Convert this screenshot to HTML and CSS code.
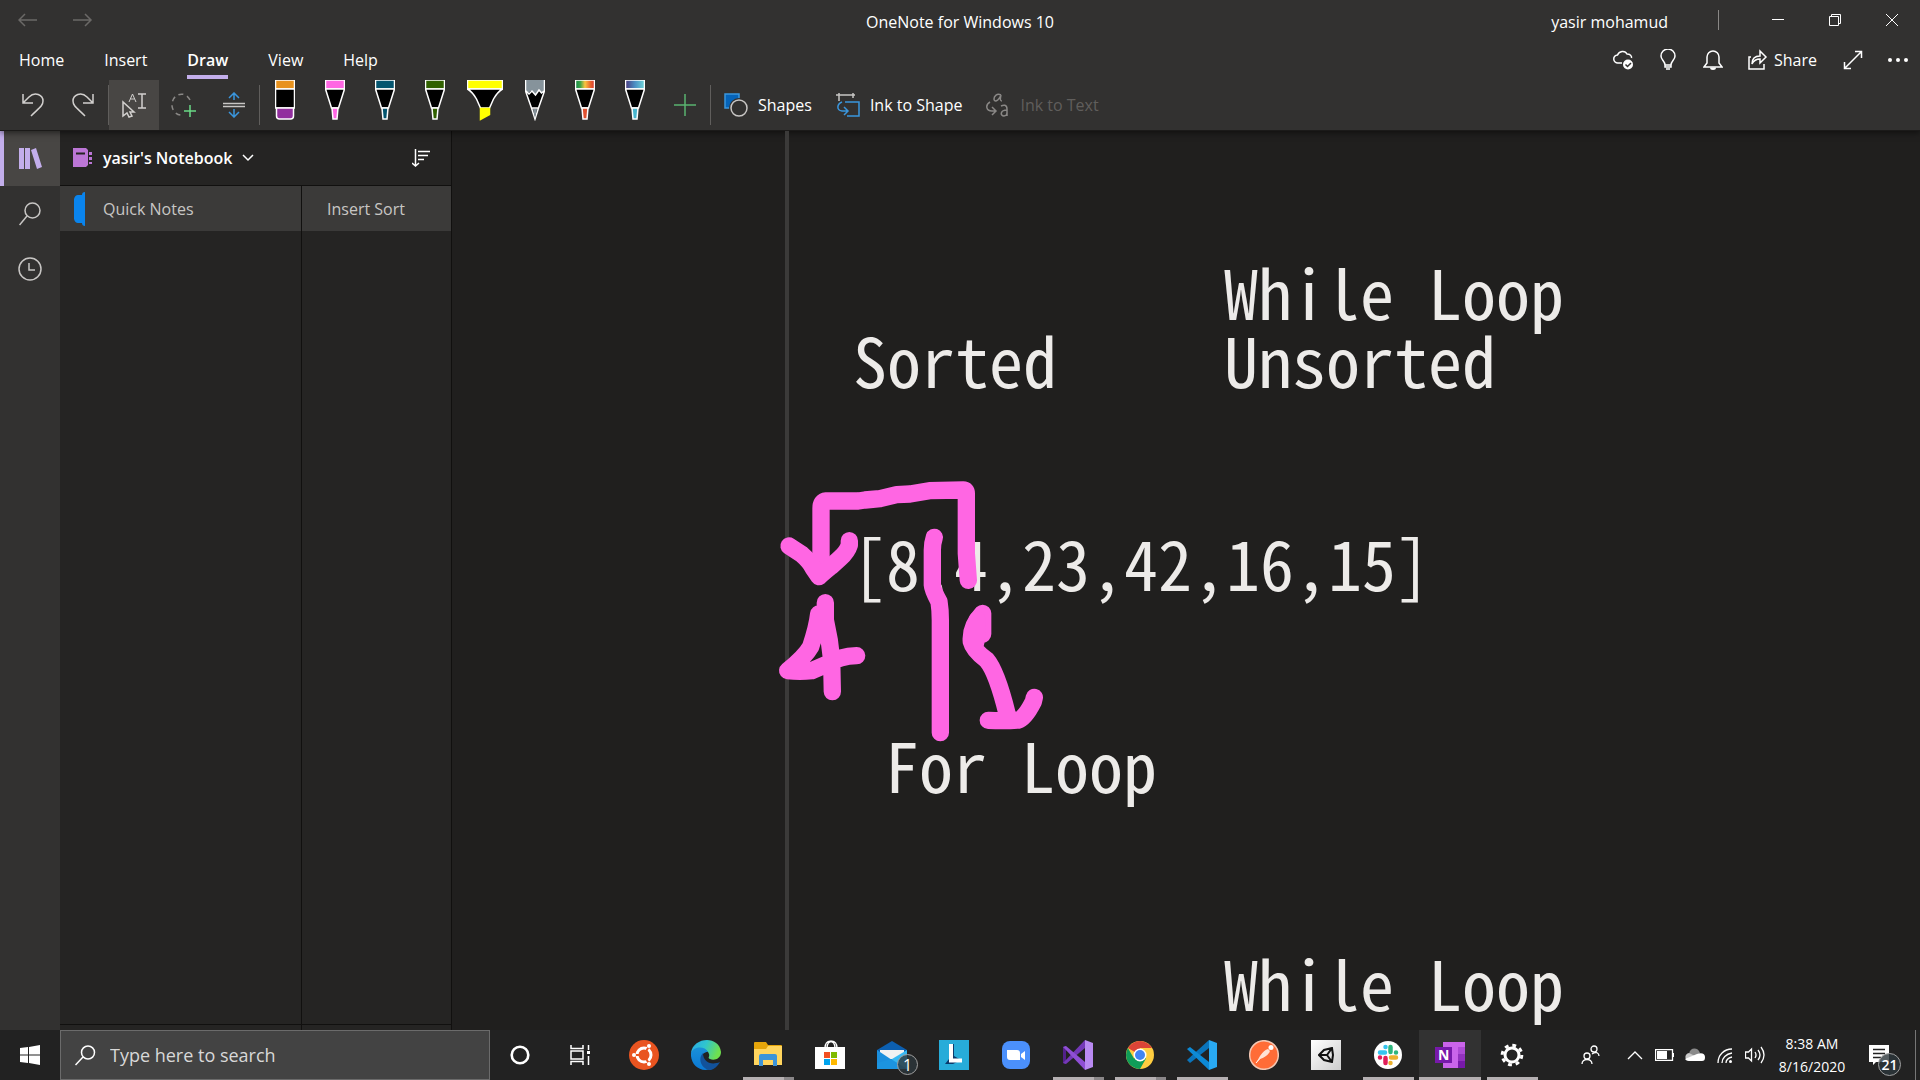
FILE: index.html
```html
<!DOCTYPE html>
<html lang="en">
<head>
<meta charset="utf-8">
<title>OneNote for Windows 10</title>
<link rel="stylesheet" href="styles.css">
</head>
<body>
<header class="chrome">
  <div class="titlebar">
    <div class="history">
      <button class="hist" aria-label="Back"><svg width="20" height="14" viewBox="0 0 20 14"><path d="M19 7H1M7 1L1 7l6 6"/></svg></button>
      <button class="hist" aria-label="Forward"><svg width="20" height="14" viewBox="0 0 20 14"><path d="M0 7h18M12 1l6 6-6 6"/></svg></button>
    </div>
    <h1 class="title">OneNote for Windows 10</h1>
    <div class="window">
      <span class="user">yasir mohamud</span>
      <span class="user-line"></span>
      <button class="win" aria-label="Minimize"><svg width="12" height="12" viewBox="0 0 12 12"><path d="M0 5.5h12"/></svg></button>
      <button class="win" aria-label="Restore"><svg width="12" height="12" viewBox="0 0 12 12"><path d="M.5 2.500h9v9h-9zM2.500 2.500v-2h9v9h-2"/></svg></button>
      <button class="win" aria-label="Close"><svg width="12" height="12" viewBox="0 0 12 12"><path d="M0 0l12 12M12 0L0 12"/></svg></button>
    </div>
  </div>
  <div class="tabrow">
    <nav class="tabs">
      <a class="tab" href="#home">Home</a>
      <a class="tab" href="#insert">Insert</a>
      <a class="tab tab-on" href="#draw">Draw</a>
      <a class="tab" href="#view">View</a>
      <a class="tab" href="#help">Help</a>
    </nav>
    <div class="actions">
      <button class="act" aria-label="Sync status"><svg width="22" height="22" viewBox="0 0 22 22"><path d="M10 14H6a4 4 0 0 1-.5-8C7 2 13 1 15 5c3 0 5 2 4.500 4"/><circle cx="16" cy="15.500" r="5" fill="#fff" stroke="none"/><path d="M13.500 15.500l2 2 3.500-3.500" stroke="#323130"/></svg></button>
      <button class="act" aria-label="Tell me"><svg width="16" height="22" viewBox="0 0 16 22"><path d="M5 16c0-4-4-5-4-9a7 7 0 0 1 14 0c0 4-4 5-4 9zM5 16v2h6v-2M6 20h4"/></svg></button>
      <button class="act" aria-label="Notifications"><svg width="20" height="22" viewBox="0 0 20 22"><path d="M1 18h18l-3-4V8a6 6 0 0 0-12 0v6z"/><path d="M7 18.500a3 2.500 0 0 0 6 0z" fill="#fff" stroke="none"/></svg></button>
      <button class="act share"><svg width="20" height="22" viewBox="0 0 20 22"><path d="M3 8H1v12h15v-5M4 15c0-5 3-8 8-8V2l6 6-6 6v-4c-4 0-6 1-8 5z"/></svg>Share</button>
      <button class="act" aria-label="Full screen"><svg width="20" height="20" viewBox="0 0 20 20"><path d="M1.500 18.500l17-17M12 1.500h6.500V8M1.500 12v6.500H8"/></svg></button>
      <button class="act" aria-label="More"><svg width="20" height="6" viewBox="0 0 20 6"><g fill="#fff" stroke="none"><circle cx="2" cy="3" r="2"/><circle cx="10" cy="3" r="2"/><circle cx="18" cy="3" r="2"/></g></svg></button>
    </div>
  </div>
  <div class="ribbon">
    <button class="tool" aria-label="Undo"><svg width="24" height="26" viewBox="0 0 24 26"><path d="M2 2v9h10M2 11L8 5c6-6 14-2 14 4 0 5-4 7-12 15"/></svg></button>
    <button class="tool" aria-label="Redo"><svg width="24" height="26" viewBox="0 0 24 26"><path d="M22 2v9H12M22 11l-6-6C10-1 2 3 2 9c0 5 4 7 12 15"/></svg></button>
    <span class="sep"></span>
    <button class="tool tool-on" aria-label="Select objects or type text"><svg width="26" height="26" viewBox="0 0 26 26"><path d="M2 10v14l4-3 2 4 3-1-2-4h4zM17 2h8M17 16h8M21 2v14"/><path d="M8 10l3.500-8L15 10M9.500 7h4" stroke-width="1"/></svg></button>
    <button class="tool" aria-label="Lasso select"><svg width="26" height="26" viewBox="0 0 26 26"><path d="M19 8A9.500 10.500 0 1 0 12 23" stroke="#8a8886" stroke-dasharray="5 4"/><path d="M19 13v12M13 19h12" stroke="#6ad985"/></svg></button>
    <button class="tool" aria-label="Insert space"><svg width="22" height="26" viewBox="0 0 22 26"><path d="M0 11.500h22M0 14.500h22" stroke="#c8c6c4"/><path d="M11 8V1M6 6l5-5 5 5M11 17v8M6 20l5 5 5-5" stroke="#3a96dd"/></svg></button>
    <span class="sep"></span>
    <button class="tool pen" aria-label="Eraser"><svg width="20" height="41" viewBox="0 0 20 41"><path d="M.5 0h19v9H.5z" fill="#e8921d"/><path d="M.5 9h19v19H.5z" fill="#000"/><path d="M1.500 28h17v8q0 3-3 3h-11q-3 0-3-3z" fill="#922f9e"/></svg></button>
    <button class="tool pen" aria-label="Pink pen"><svg width="20" height="41" viewBox="0 0 20 41"><path d="M.5 0h19v9H.5z" fill="#ff66e3"/><path d="M.5 9h19l-6 19h-7z" fill="#000"/><path d="M7 28h6l-1 11H8z" fill="#ff66e3"/></svg></button>
    <button class="tool pen" aria-label="Teal pen"><svg width="20" height="41" viewBox="0 0 20 41"><path d="M.5 0h19v9H.5z" fill="#04556f"/><path d="M.5 9h19l-6 19h-7z" fill="#000"/><path d="M7 28h6l-1 11H8z" fill="#04556f"/></svg></button>
    <button class="tool pen" aria-label="Green pen"><svg width="20" height="41" viewBox="0 0 20 41"><path d="M.5 0h19v9H.5z" fill="#316100"/><path d="M.5 9h19l-6 19h-7z" fill="#000"/><path d="M7 28h6l-1 11H8z" fill="#316100"/></svg></button>
    <button class="tool pen" aria-label="Yellow highlighter"><svg width="36" height="41" viewBox="0 0 36 41"><path d="M.5 0h35v9H.5z" fill="#ff0"/><path d="M.5 9h35q-5 3-9 10l-4 9h-9l-4-9q-4-7-9-10z" fill="#000"/><path d="M13.500 28.500h9v6l-9 5z" fill="#ff0" stroke="#ff0"/></svg></button>
    <button class="tool pen" aria-label="Pencil"><svg width="20" height="41" viewBox="0 0 20 41"><path d="M.5 0h19v11l-3 2-3-3-3 5-4-4-3 3-3-3z" fill="#86939b" stroke="none"/><path d="M1 12l2 1 3-2 4 4 4-5 3 3 2-1-6 16H7z" fill="#000" stroke="none"/><path d="M.5 0v11l6 17L10 39l3.500-11 6-17V0M1 11l3 3 3-3 3.500 4 3.500-5 2.500 3 2.500-2M6.500 28h7"/><path d="M8 29h4l-2 9z" fill="#86939b" stroke="none"/></svg></button>
    <button class="tool pen" aria-label="Rainbow pen"><svg width="20" height="41" viewBox="0 0 20 41"><defs><linearGradient id="rainbow"><stop offset="0" stop-color="#178a49"/><stop offset=".25" stop-color="#3da549"/><stop offset=".5" stop-color="#fbc43f"/><stop offset=".8" stop-color="#e8622e"/><stop offset="1" stop-color="#d93a35"/></linearGradient></defs><path d="M.5 0h19v9H.5z" fill="url(#rainbow)"/><path d="M.5 9h19l-6 19h-7z" fill="#000"/><path d="M7 28h6l-1 11H8z" fill="#e0512f"/></svg></button>
    <button class="tool pen" aria-label="Galaxy pen"><svg width="20" height="41" viewBox="0 0 20 41"><defs><linearGradient id="galaxy"><stop offset="0" stop-color="#4b3b80"/><stop offset=".5" stop-color="#4b8fc4"/><stop offset="1" stop-color="#6fd6d8"/></linearGradient></defs><path d="M.5 0h19v9H.5z" fill="url(#galaxy)"/><path d="M.5 9h19l-6 19h-7z" fill="#000"/><path d="M7 28h6l-1 11H8z" fill="#48b6cf"/></svg></button>
    <button class="tool" aria-label="Add pen"><svg width="22" height="22" viewBox="0 0 22 22"><path d="M11 0v22M0 11h22" stroke="#59b36f"/></svg></button>
    <span class="sep"></span>
    <button class="labeled"><svg width="24" height="24" viewBox="0 0 24 24"><path d="M1 1h14v14H1z" fill="#0563b8" stroke="#3a96dd"/><circle cx="15" cy="15" r="8" fill="#323130" stroke="#323130" stroke-width="4"/><circle cx="15" cy="15" r="8" stroke="#c8c6c4"/></svg>Shapes</button>
    <button class="labeled"><svg width="24" height="24" viewBox="0 0 24 24"><path d="M0 2h19M3 0v8M17 0v5" stroke="#c8c6c4"/><path d="M9 9h14v14H11M6 9c-5 2-6 8 0 9h6M8 14l4 4-4 4" stroke="#3a96dd"/></svg>Ink to Shape</button>
    <button class="labeled" disabled><svg class="ink-text" width="24" height="24" viewBox="0 0 24 24"><path d="M15 2c-4-2-7 1-7 4 0 3 4 3 7-4-1 4-1 6 1 6M15 13c2-1 6-2 6 3v7M21 17c-7 0-7 6-3 6 2 0 3-2 3-3M4 9c-5 3-4 9 2 9h4M6 14l4 4-4 4"/></svg>Ink to Text</button>
  </div>
</header>

<main class="workspace">
  <nav class="rail">
    <button class="rail-btn rail-on" aria-label="Notebooks"><svg width="24" height="22" viewBox="0 0 24 22"><path d="M0 0h5v21H0zM6 0h5v21H6zM12 2l5-2 6 19-5 2z" fill="#c3aeeb" stroke="none"/></svg></button>
    <button class="rail-btn" aria-label="Search"><svg width="22" height="24" viewBox="0 0 22 24"><circle cx="13.500" cy="8.500" r="7.500"/><path d="M8 14l-7.500 9"/></svg></button>
    <button class="rail-btn" aria-label="Recent notes"><svg width="24" height="24" viewBox="0 0 24 24"><circle cx="12" cy="12" r="11"/><path d="M11 6v7h6"/></svg></button>
  </nav>
  <aside class="panes">
    <div class="book">
      <button class="book-name"><svg class="book-icon" width="20" height="20" viewBox="0 0 20 20"><path d="M0 0h13l2 2v15l-2 2H0zM16 4h3v3h-3zM16 9h3v3h-3zM16 14h3v2h-3z" fill="#bc76d6" stroke="none"/><path d="M3 5.500h9" stroke="#252423" stroke-width="2"/></svg>yasir's Notebook<svg width="12" height="8" viewBox="0 0 12 8"><path d="M1 1l5 5 5-5"/></svg></button>
      <button class="sort" aria-label="Sort"><svg width="18" height="18" viewBox="0 0 18 18"><path d="M3.500 0v17M0 14l3.500 3L7 14M6 2.500h12M6 6.500h10M6 10.500h6"/></svg></button>
    </div>
    <div class="lists">
      <section class="sections">
        <a class="item" href="#quick"><svg width="12" height="34" viewBox="0 0 12 34"><path d="M11 0v34q-3 0-3-3H4q-3 0-4-4V7q1-4 4-4h4q0-3 3-3z" fill="#0a84ed" stroke="none"/></svg>Quick Notes</a>
        <div class="foot"></div>
      </section>
      <section class="pages">
        <a class="item item-page" href="#sort">Insert Sort</a>
        <div class="foot"></div>
      </section>
    </div>
  </aside>
  <article class="canvas">
    <p class="note note-while">While Loop</p>
    <p class="note note-sorted">Sorted</p>
    <p class="note note-unsorted">Unsorted</p>
    <p class="note note-array">[8,4,23,42,16,15]</p>
    <p class="note note-for">For Loop</p>
    <p class="note note-while2">While Loop</p>
    <svg class="ink" viewBox="0 0 1260 1080">
      <path d="M595 361L589 280V100Q589 90 580 90L478 92 420 102 380 104 330 116 285 120 265 123H168Q153 124 153 145V340"/>
      <path d="M57 258L95 283Q120 305 130 325L147 350Q160 338 182 320L210 295Q232 275 238 255V242"/>
      <path d="M166 428V480Q180 540 185 600L187 695M146 462Q142 500 122 560Q105 590 53 632Q90 636 125 632L170 613Q210 588 260 587"/>
      <path d="M493 232Q487 250 487 270V375Q488 390 507 425 511 450 511 480V818"/>
      <path d="M638 522V460Q600 500 604 545 610 570 650 600 680 635 711 760M655 781Q710 783 745 780 765 775 790 725L793 712"/>
      <path d="M622 480L618 545"/>
    </svg>
  </article>
</main>

<footer class="taskbar">
  <button class="start" aria-label="Start"><svg width="20" height="20" viewBox="0 0 20 20"><path d="M0 3l8-1v7.500H0zM9 2l11-2v9.500H9zM0 10.500h8V18l-8-1zM9 10.500h11V20L9 18z" fill="#fff" stroke="none"/></svg></button>
  <label class="find"><svg width="21" height="21" viewBox="0 0 21 21"><circle cx="13" cy="7.500" r="6.500"/><path d="M8 12l-7.500 8"/></svg><input class="find-box" type="text" placeholder="Type here to search"></label>
  <div class="sys">
    <button class="app app-sys" aria-label="Cortana"><svg width="20" height="20" viewBox="0 0 20 20"><circle cx="10" cy="10" r="8.300" stroke-width="2.600"/></svg></button>
    <button class="app app-sys" aria-label="Task View"><svg width="21" height="20" viewBox="0 0 21 20"><path d="M1 0v3.500h12V0M1 6h12v8H1zM1 20v-3.500h12V20M18.500 0v5M18.500 11v9"/><path d="M17 6h3v3h-3z" fill="#fff" stroke="none"/></svg></button>
  </div>
  <button class="app" aria-label="Ubuntu"><svg width="30" height="30" viewBox="0 0 30 30"><circle cx="15" cy="15" r="15" fill="#e95420" stroke="none"/><circle cx="15" cy="15" r="7" stroke-width="3"/><path d="M15 15H3M15 15l6-10.400M15 15l6 10.400" stroke="#e95420" stroke-width="2"/><g fill="#fff" stroke="none"><circle cx="5" cy="15" r="2"/><circle cx="20" cy="6" r="2"/><circle cx="20" cy="24" r="2"/></g></svg></button>
  <button class="app" aria-label="Edge"><svg width="30" height="30" viewBox="0 0 30 30"><defs><linearGradient id="edge" x2="1" y2=".3"><stop offset="0" stop-color="#2aa7e8"/><stop offset=".5" stop-color="#2fc5cf"/><stop offset="1" stop-color="#6fe04e"/></linearGradient><linearGradient id="edgeb" x2="0" y2="1"><stop offset="0" stop-color="#1a90d8"/><stop offset="1" stop-color="#0b78d4"/></linearGradient></defs><g stroke="none"><path d="M0 13C2-3 28-5 30 12c0 7-7 9-11 7-3-1 0-2-1-5-2-7-13-6-18-1z" fill="url(#edge)"/><path d="M0 13c3-7 14-7 17-1-6 0-7 5-5 10 2 5 6 8 10 6C10 34-1 25 0 13z" fill="url(#edgeb)"/><path d="M12 13c-6 6-1 17 8 17 3-1 7-4 9-8-10 4-17-1-17-9z" fill="#12529b"/></g></svg></button>
  <button class="app app-run app-multi" aria-label="File Explorer"><svg width="28" height="26" viewBox="0 0 28 26"><g stroke="none"><path d="M0 1q0-1 1-1h11l2 3h13q1 0 1 1v18H0z" fill="#e5a50a"/><path d="M0 7h12l2-3h14v19H0z" fill="#ffd55e"/><path d="M5 24V14q0-2 2-2h14q2 0 2 2v10h-4v-6H9v6z" fill="#3c94d9"/></g></svg></button>
  <button class="app" aria-label="Microsoft Store"><svg width="30" height="30" viewBox="0 0 30 30"><path d="M10 8c0-9 10-9 10 0M12 8c0-9 10-9 10 0"/><g stroke="none"><path d="M0 7h30v22H0z" fill="#fff"/><path d="M9 12h6v6H9z" fill="#f25022"/><path d="M16 12h6v6h-6z" fill="#7fba00"/><path d="M9 19h6v6H9z" fill="#00a4ef"/><path d="M16 19h6v6h-6z" fill="#ffb900"/></g></svg></button>
  <button class="app" aria-label="Mail"><svg width="30" height="28" viewBox="0 0 30 28"><g stroke="none"><path d="M0 9L15 0l15 9v6H0z" fill="#0c5fb0"/><path d="M3 9h24v9H3z" fill="#f2f2f2"/><path d="M0 9l15 10L0 28z" fill="#1b8fdd"/><path d="M30 9L15 18 0 28h30z" fill="#37b8f2"/><path d="M0 28V22l14-4 16 10z" fill="#1c94e0"/></g></svg><span class="badge badge-mail">1</span></button>
  <button class="app" aria-label="L"><span class="tile-l"><svg width="30" height="30" viewBox="0 0 30 30"><path d="M10 4v15l-4 5h8l8-4-7-4V4z" fill="#0b3a6b" stroke="none"/><path d="M12 4v16.500h11" stroke-width="4"/></svg></span></button>
  <button class="app" aria-label="Zoom"><svg width="28" height="28" viewBox="0 0 28 28"><g stroke="none"><rect width="28" height="28" rx="8" fill="#4b90fc"/><path d="M5 9h10q3 0 3 3v7H8q-3 0-3-3zM19 13l4-3v9l-4-3z" fill="#fff"/></g></svg></button>
  <button class="app app-run app-multi" aria-label="Visual Studio"><svg width="30" height="30" viewBox="0 0 30 30"><g stroke="none"><path d="M0 7l3-1v18l-3-1z" fill="#52218a"/><path d="M0 23L22 0v8L3 24z" fill="#7438b8"/><path d="M3 6l19 16v8L0 7z" fill="#8f4fd5"/><path d="M22 0l8 3v24l-8 3z" fill="#b98af2"/></g></svg></button>
  <button class="app app-run app-multi" aria-label="Chrome"><svg width="28" height="28" viewBox="0 0 28 28"><g stroke="none"><circle cx="14" cy="14" r="14" fill="#ffcd40"/><path d="M14 14L1.900 7A14 14 0 0 1 26.100 7H14z" fill="#db4437"/><path d="M1.900 7A14 14 0 0 0 14 28l6-10.500L14 14l-6 3.500z" fill="#0f9d58"/><circle cx="14" cy="14" r="6.500" fill="#fff"/><circle cx="14" cy="14" r="5" fill="#4285f4"/></g></svg></button>
  <button class="app app-run" aria-label="Visual Studio Code"><svg width="30" height="30" viewBox="0 0 30 30"><g stroke="none"><path d="M0 20L22 0v8L3 23z" fill="#0a74bb"/><path d="M0 9l3-2 19 15v8z" fill="#0d8ad6"/><path d="M22 0l8 3v24l-8 3z" fill="#29a9f2"/></g></svg></button>
  <button class="app" aria-label="Postman"><svg width="30" height="30" viewBox="0 0 30 30"><circle cx="15" cy="15" r="14.300" fill="#ff6c37" stroke="#f3c7b3"/><path d="M7 23l6-7" stroke-width="1"/><path d="M11 16q4-6 8-7 3 2 1 4-3 4-9 6l-4 4z" fill="#ffe3d6" stroke="none"/><circle cx="22" cy="7.500" r="2.500" fill="#fff" stroke="none"/></svg></button>
  <button class="app" aria-label="Unity"><span class="tile-u"><svg width="16" height="16" viewBox="0 0 16 16"><path d="M1 8l5-5 8-2 1 7-1 7-8-2zM1 8h8M9 8l5-7M9 8l5 7" stroke="#111" stroke-width="2"/></svg></span></button>
  <button class="app app-run" aria-label="Slack"><svg width="28" height="28" viewBox="0 0 28 28"><circle cx="14" cy="14" r="14" fill="#fff" stroke="none"/><g stroke-width="4.500" stroke-linecap="round"><path d="M6 11.500h5M11.500 6v0" stroke="#36c5f0"/><path d="M16.500 6v5M22 11.500v0" stroke="#2eb67d"/><path d="M17 16.500h5M16.500 22v0" stroke="#ecb22e"/><path d="M11.500 17v5M6 16.500v0" stroke="#e01e5a"/></g></svg></button>
  <button class="app app-run app-active" aria-label="OneNote"><span class="tile-n"><svg width="30" height="26" viewBox="0 0 30 26"><g stroke="none"><path d="M8 0h22v26H8z" fill="#ca64ea"/><path d="M23 5h7v7h-7z" fill="#ae4bd5"/><path d="M23 12h7v7h-7z" fill="#9332bf"/><path d="M23 19h7v7h-7z" fill="#7719aa"/><path d="M0 5h17v16H0z" fill="#7719aa"/></g></svg><b class="letter">N</b></span></button>
  <button class="app app-run" aria-label="Settings"><svg width="24" height="24" viewBox="0 0 24 24"><circle cx="12" cy="12" r="7" stroke-width="3"/><circle cx="12" cy="12" r="9.800" stroke-width="3" stroke-dasharray="3.850 3.850"/></svg></button>
  <div class="tray">
    <button class="tray-btn people" aria-label="People"><svg width="19" height="20" viewBox="0 0 19 20"><circle cx="13" cy="4" r="3"/><circle cx="6" cy="11" r="3"/><path d="M1 19c0-6 10-6 10 0M11 9c4-3 7-1 7 2"/></svg></button>
    <button class="tray-btn" aria-label="Hidden icons"><svg width="16" height="10" viewBox="0 0 16 10"><path d="M1 9l7-7 7 7"/></svg></button>
    <button class="tray-btn" aria-label="Battery"><svg width="20" height="12" viewBox="0 0 20 12"><path d="M.5.5h17v11H.5z"/><path d="M2 2h10v8H2zM18 4h1v4h-1z" fill="#fff" stroke="none"/></svg></button>
    <button class="tray-btn" aria-label="OneDrive"><svg width="20" height="14" viewBox="0 0 20 14"><g stroke="none"><path d="M4 6C5-1 13-1 15 5l-4 5z" fill="#8a8a8a"/><path d="M5 13C-1 13-1 6 4 5l8 4z" fill="#c8c8c8"/><path d="M4 13c-2 0-3-1-4-2l12-5c5-2 8 0 8 3s-1 4-3 4z" fill="#fff"/></g></svg></button>
    <button class="tray-btn" aria-label="Wi-Fi"><svg width="16" height="17" viewBox="0 0 16 17"><path d="M1 16C1 8 7 2 15 2M5 16c0-5 4-9 10-10M9 16c0-3 2-5 6-6"/><circle cx="13.500" cy="14.500" r="1.500" fill="#fff" stroke="none"/></svg></button>
    <button class="tray-btn" aria-label="Volume"><svg width="21" height="18" viewBox="0 0 21 18"><path d="M.5 6h3l3-3v12l-3-3h-3zM10 6q2 3 0 6M13 4q4 5 0 10M16 1q6 8 0 16"/></svg></button>
    <time class="clock" datetime="2020-08-16T08:38"><span>8:38 AM</span><span>8/16/2020</span></time>
    <button class="tray-btn notif" aria-label="Notifications"><svg width="20" height="20" viewBox="0 0 20 20"><path d="M0 0h20v17H7l-3 3v-3H0z" fill="#fff" stroke="none"/><path d="M4 4.500h12M4 8.500h12M4 12.500h8" stroke="#222"/></svg><span class="badge badge-notif">21</span></button>
    <span class="peek"></span>
  </div>
</footer>
</body>
</html>
```
FILE: styles.css
```css
* { box-sizing: border-box; }
body {
  margin: 0;
  height: 100vh;
  display: flex;
  flex-direction: column;
  overflow: hidden;
  background: #201f1e;
  color: #fff;
  font: 16px/24px "Open Sans", "Noto Sans", sans-serif;
}
button {
  display: flex;
  align-items: center;
  justify-content: center;
  border: 0;
  padding: 0;
  background: none;
  color: inherit;
  font: inherit;
}
a { color: inherit; text-decoration: none; }
svg {
  display: block;
  flex: none;
  fill: none;
  stroke: #fff;
  stroke-width: 1.500;
}

.chrome {
  position: relative;
  background: #323130;
  border-bottom: 1px solid #1b1a19;
  box-shadow: 0 2px 6px rgba(0, 0, 0, .5);
}
.titlebar {
  height: 40px;
  display: grid;
  grid-template-columns: 1fr auto 1fr;
  align-items: center;
}
.history { display: flex; }
.hist { width: 55px; height: 38px; }
.hist svg { stroke: #6b6967; }
.title { margin: 0; padding-top: 4px; font-size: 16px; line-height: 24px; font-weight: 400; }
.window { display: flex; justify-content: flex-end; align-items: center; }
.user { padding-top: 4px; }
.user-line { width: 1px; height: 20px; margin: 0 30px 0 50px; background: #8a8886; }
.win { width: 57px; height: 38px; }
.win svg { stroke-width: 1; }

.tabrow { height: 40px; display: flex; justify-content: space-between; }
.tabs { display: flex; gap: 40px; padding-left: 19px; }
.tab { padding: 8px 0 3px; height: 39px; border-bottom: 4px solid transparent; }
.tab-on { font-weight: 600; border-color: #c3aeeb; }
.actions { display: flex; }
.act { width: 45px; height: 40px; }
.share { width: 95px; gap: 6px; }

.ribbon { height: 50px; display: flex; align-items: center; padding-left: 8px; }
.tool { width: 50px; height: 50px; }
.tool svg { stroke: #d2d0ce; }
.tool-on { background: #484644; }
.pen { align-items: flex-start; }
.pen svg { stroke: #fff; }
.sep { width: 1px; height: 40px; background: #605e5c; }
.labeled { height: 50px; gap: 10px; margin-left: 24px; }
.sep + .labeled { margin-left: 13px; }
.labeled:disabled { color: #605e5c; }
.ink-text { stroke: #8a8886; }

.workspace { flex: 1; min-height: 0; display: flex; }
.rail { width: 60px; background: #323130; }
.rail-btn { width: 100%; height: 55px; }
.rail-btn svg { stroke: #c8c6c4; }
.rail-on { background: #484644; border-left: 4px solid #c3aeeb; padding-right: 2px; }
.panes {
  width: 392px;
  display: flex;
  flex-direction: column;
  background: #252423;
  border-right: 1px solid #11100f;
}
.book {
  height: 55px;
  display: flex;
  justify-content: space-between;
  align-items: center;
  padding: 0 21px 0 13px;
  border-bottom: 1px solid #11100f;
}
.book-name { gap: 10px; font-weight: 600; }
.lists { flex: 1; display: flex; }
.sections, .pages { display: flex; flex-direction: column; justify-content: space-between; }
.sections { width: 242px; border-right: 1px solid #11100f; }
.pages { flex: 1; }
.item {
  height: 45px;
  display: flex;
  align-items: center;
  gap: 17px;
  padding-left: 14px;
  background: #3b3a39;
  color: #c8c6c4;
}
.item-page { padding-left: 25px; }
.foot { height: 6px; border-top: 1px solid #11100f; }

.canvas { position: relative; flex: 1; overflow: hidden; }
.canvas::before {
  content: "";
  position: absolute;
  inset: 0 auto 0 333px;
  width: 4px;
  background: #3b3a39;
}
.note {
  position: absolute;
  margin: 0;
  color: #edebe9;
  font: 68px/68px "Noto Sans CJK JP", monospace;
  font-feature-settings: "hwid" 1;
  white-space: pre;
}
.note-while { left: 772px; top: 126px; }
.note-sorted { left: 401px; top: 194px; }
.note-unsorted { left: 772px; top: 194px; }
.note-array { left: 400px; top: 397px; }
.note-for { left: 433px; top: 599px; }
.note-while2 { left: 772px; top: 817px; }
.ink {
  position: absolute;
  left: 318px;
  top: 329px;
  width: 420px;
  height: 360px;
  stroke: #ff66e3;
  stroke-width: 52;
  stroke-linecap: round;
  stroke-linejoin: round;
}

.taskbar { position: relative; height: 50px; display: flex; background: #222; }
.start { width: 60px; }
.find {
  width: 430px;
  display: flex;
  align-items: center;
  gap: 14px;
  padding-left: 14px;
  border: 1px solid #6b6b6b;
  background: #434343;
}
.find-box {
  flex: 1;
  min-width: 0;
  border: 0;
  padding: 0;
  background: none;
  color: #d8d8d8;
  font: 18px/24px "Open Sans", "Noto Sans", sans-serif;
}
.find-box::placeholder { color: #d8d8d8; opacity: 1; }
.sys { display: flex; padding-right: 3px; }
.app { position: relative; width: 62px; height: 50px; }
.app-sys { width: 60px; }
.app-run::after {
  content: "";
  position: absolute;
  left: 6px;
  right: 5px;
  bottom: 0;
  height: 3px;
  background: #b5b0b2;
}
.app-multi::after { border-right: 10px solid #8a8789; }
.app-active { background: #323232; }
.app-active::after { left: 0; right: 0; }
.badge {
  position: absolute;
  display: flex;
  align-items: center;
  justify-content: center;
  border: 1px solid #a0a0a0;
  border-radius: 50%;
  background: rgba(45, 55, 60, .8);
}
.badge-mail { left: 36px; top: 24px; width: 21px; height: 21px; font-size: 16px; }
.badge-notif { left: 24px; top: 23px; width: 23px; height: 23px; font-size: 14px; font-weight: 600; }
.tile-l { background: #27acd9; }
.tile-u { padding: 7px; background: linear-gradient(135deg, #fff, #ccc); }
.tile-n { position: relative; }
.letter { position: absolute; left: 3px; top: 5px; font-size: 14px; line-height: 16px; }
.tray { flex: 1; display: flex; justify-content: flex-end; }
.tray-btn { position: relative; width: 30px; height: 50px; }
.tray-btn svg { stroke-width: 1.300; }
.people { width: 60px; }
.clock {
  width: 84px;
  display: flex;
  flex-direction: column;
  justify-content: center;
  text-align: center;
  font-size: 14px;
  line-height: 23px;
}
.notif { width: 60px; margin-right: 1px; justify-content: flex-start; padding-left: 15px; }
.peek { width: 1px; margin-right: 4px; background: #777; }
```
